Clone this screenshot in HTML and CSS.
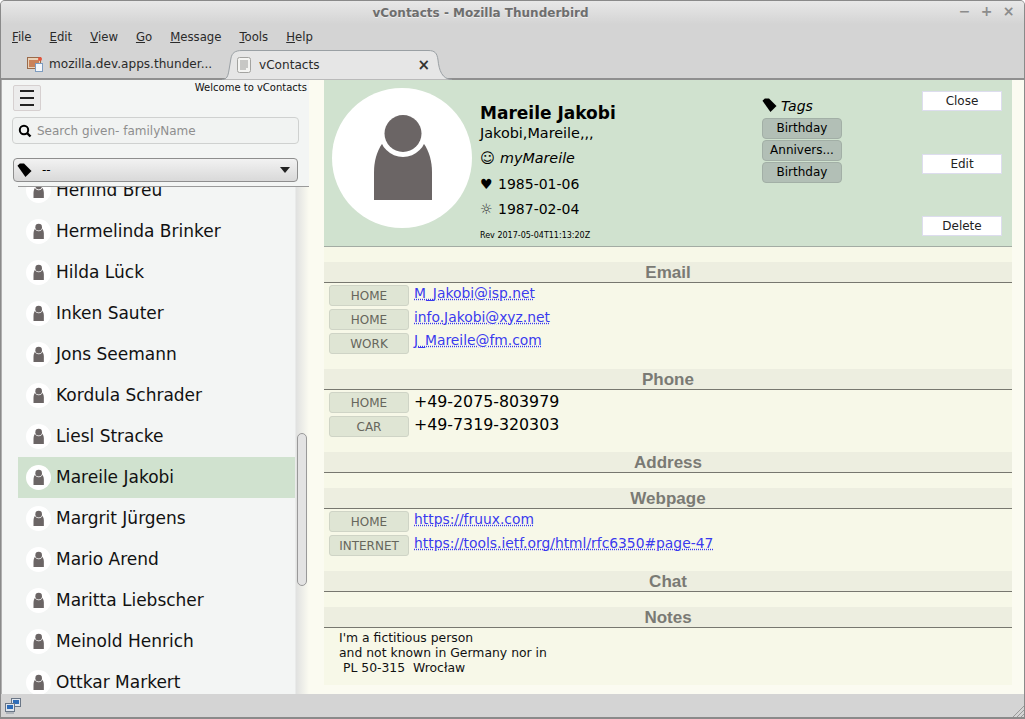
FILE: index.html

```html
<!DOCTYPE html>
<html lang="en">
<head>
  <meta charset="UTF-8">
  <title>vContacts - Mozilla Thunderbird</title>
  <link rel="stylesheet" href="styles.css">
</head>
<body>
  <svg class="defs" width="0" height="0">
    <symbol id="person" viewBox="0 0 140 140">
      <circle cx="70" cy="70" r="70" fill="#fff"/>
      <path d="M42 112V84c0-22 12-40 29-40s29 18 29 40v28z" fill="#6b6565"/>
      <circle cx="71" cy="45.500" r="23.500" fill="#fff"/>
      <circle cx="71" cy="45.500" r="18.500" fill="#6b6565"/>
    </symbol>
    <symbol id="tag" viewBox="0 0 16 16">
      <path d="M0.500 3 3 0.500H7.500L15.500 8.500 9 15z" fill="#000"/>
    </symbol>
  </svg>

  <div class="window">
    <div class="titlebar">
      <span class="title">vContacts - Mozilla Thunderbird</span>
      <span class="winbtns"><span>−</span><span>+</span><span>×</span></span>
    </div>

    <div class="menubar">
      <span><u>F</u>ile</span>
      <span><u>E</u>dit</span>
      <span><u>V</u>iew</span>
      <span><u>G</u>o</span>
      <span><u>M</u>essage</span>
      <span><u>T</u>ools</span>
      <span><u>H</u>elp</span>
    </div>

    <div class="tabbar">
      <div class="tab">
        <svg class="tabicon" width="16" height="16" viewBox="0 0 16 16">
          <rect x="0.500" y="1.500" width="13" height="11" fill="#e9d2b8" stroke="#9a6a4a"/>
          <rect x="2" y="4" width="10" height="7" fill="#c9825a"/>
          <rect x="8.500" y="7.500" width="7" height="8" fill="#f4f7fb" stroke="#7d9cc0"/>
          <circle cx="13" cy="3" r="2" fill="#e2543c"/>
        </svg>
        <span>mozilla.dev.apps.thunder...</span>
      </div>
      <div class="tab tab-active">
        <svg class="tabshape" width="232" height="30" viewBox="0 0 232 30">
          <path d="M0 29.500C5 29.500 6 26 7 20L9 8C10 3 13 0.500 20 0.500H206C213 0.500 215 3 216 10C217 20 220 29.500 230 29.500" fill="#e6e6e6" stroke="#9aa0a4"/>
        </svg>
        <svg class="tabicon" width="16" height="16" viewBox="0 0 16 16">
          <rect x="1.500" y="0.500" width="13" height="15" rx="2" fill="#f4f4f2" stroke="#a3a3a0"/>
          <path d="M4 4h8M4 6h8M4 8h8M4 10h8M4 12h6" stroke="#9a9a98"/>
        </svg>
        <span class="tabname">vContacts</span>
        <span class="tabclose">×</span>
      </div>
    </div>

    <div class="main">
      <aside class="sidebar">
        <div class="side-top">
          <div class="welcome">Welcome to vContacts</div>
          <button class="hamburger"><i></i><i></i><i></i></button>
          <div class="search">
            <svg width="14" height="14" viewBox="0 0 14 14">
              <circle cx="6" cy="6" r="4.200" fill="none" stroke="#000" stroke-width="2"/>
              <path d="M9 9l3.500 3.500" stroke="#000" stroke-width="2.400"/>
            </svg>
            <span>Search given- familyName</span>
          </div>
          <div class="tagselect">
            <svg width="15" height="15"><use href="#tag"/></svg>
            <span class="tagselect-val">--</span>
            <span class="caret"></span>
          </div>
        </div>
        <div class="listwrap">
          <ul class="contacts">
            <li><svg width="25" height="25"><use href="#person"/></svg>Herlind Breu</li>
            <li><svg width="25" height="25"><use href="#person"/></svg>Hermelinda Brinker</li>
            <li><svg width="25" height="25"><use href="#person"/></svg>Hilda Lück</li>
            <li><svg width="25" height="25"><use href="#person"/></svg>Inken Sauter</li>
            <li><svg width="25" height="25"><use href="#person"/></svg>Jons Seemann</li>
            <li><svg width="25" height="25"><use href="#person"/></svg>Kordula Schrader</li>
            <li><svg width="25" height="25"><use href="#person"/></svg>Liesl Stracke</li>
            <li class="selected"><svg width="25" height="25"><use href="#person"/></svg>Mareile Jakobi</li>
            <li><svg width="25" height="25"><use href="#person"/></svg>Margrit Jürgens</li>
            <li><svg width="25" height="25"><use href="#person"/></svg>Mario Arend</li>
            <li><svg width="25" height="25"><use href="#person"/></svg>Maritta Liebscher</li>
            <li><svg width="25" height="25"><use href="#person"/></svg>Meinold Henrich</li>
            <li><svg width="25" height="25"><use href="#person"/></svg>Ottkar Markert</li>
          </ul>
          <div class="thumb"></div>
        </div>
      </aside>

      <section class="detail">
        <header class="card">
          <svg class="photo" width="140" height="140"><use href="#person"/></svg>
          <div class="identity">
            <div class="fullname">Mareile Jakobi</div>
            <div class="structname">Jakobi,Mareile,,,</div>
            <div class="fact nick"><span class="glyph">☺</span><em>myMareile</em></div>
            <div class="fact bday"><span class="glyph">♥</span>1985-01-06</div>
            <div class="fact"><span class="glyph glyph-sun">☼</span>1987-02-04</div>
            <div class="rev">Rev 2017-05-04T11:13:20Z</div>
          </div>
          <div class="tags">
            <div class="tags-head"><svg width="15" height="15"><use href="#tag"/></svg><em>Tags</em></div>
            <div class="tagchip">Birthday</div>
            <div class="tagchip">Annivers...</div>
            <div class="tagchip">Birthday</div>
          </div>
          <div class="actions">
            <button>Close</button>
            <button>Edit</button>
            <button>Delete</button>
          </div>
        </header>

        <div class="group">
          <h3>Email</h3>
          <div class="row"><span class="kind">HOME</span><a href="#">M_Jakobi@isp.net</a></div>
          <div class="row"><span class="kind">HOME</span><a href="#">info.Jakobi@xyz.net</a></div>
          <div class="row"><span class="kind">WORK</span><a href="#">J_Mareile@fm.com</a></div>
        </div>

        <div class="group">
          <h3>Phone</h3>
          <div class="row"><span class="kind">HOME</span><span class="val">+49-2075-803979</span></div>
          <div class="row"><span class="kind">CAR</span><span class="val">+49-7319-320303</span></div>
        </div>

        <div class="group group-empty">
          <h3>Address</h3>
        </div>

        <div class="group">
          <h3>Webpage</h3>
          <div class="row"><span class="kind">HOME</span><a href="#">https://fruux.com</a></div>
          <div class="row"><span class="kind">INTERNET</span><a href="#">https://tools.ietf.org/html/rfc6350#page-47</a></div>
        </div>

        <div class="group group-empty">
          <h3>Chat</h3>
        </div>

        <div class="group group-notes">
          <h3>Notes</h3>
          <pre class="notes">I'm a fictitious person
and not known in Germany nor in
 PL 50-315  Wrocław</pre>
        </div>
      </section>
    </div>

    <div class="statusbar">
      <svg width="16" height="16" viewBox="0 0 16 16">
        <rect x="6.500" y="0.500" width="9" height="8" fill="#dfe6ee" stroke="#6a7686"/>
        <rect x="8" y="2" width="6" height="4" fill="#2f6db8"/>
        <rect x="0.500" y="5.500" width="9" height="8" fill="#dfe6ee" stroke="#6a7686"/>
        <rect x="2" y="7" width="6" height="4" fill="#2f6db8"/>
        <path d="M1 15h8" stroke="#8a94a0"/>
      </svg>
      <svg class="grip" width="11" height="13" viewBox="0 0 11 13">
        <path d="M0 13 11 2M4 13 11 6M8 13 11 10" stroke="#9a9a9a"/>
      </svg>
    </div>
  </div>
</body>
</html>
```

FILE: styles.css

```css
* { box-sizing: border-box; }
html, body { margin: 0; padding: 0; }
body { font-family: "DejaVu Sans", sans-serif; color: #000; background: #fff; overflow: hidden; }
.defs { position: absolute; }

.window { width: 1025px; height: 719px; display: flex; flex-direction: column; background: #d4d4d4; border: 1px solid #8a8a8a; border-bottom: 2px solid #8a8a8a; border-radius: 5px 5px 0 0; overflow: hidden; }

.titlebar { height: 23px; flex: none; display: flex; align-items: center; justify-content: center; padding-right: 64px; position: relative; background: linear-gradient(#e8e8e8, #d4d4d4); }
.title { font-size: 12px; font-weight: bold; color: #6e6e6e; text-shadow: 0 1px 0 #eee; }
.winbtns { position: absolute; right: 9px; top: 2px; display: flex; gap: 9px; font-size: 14px; font-weight: bold; color: #8c8c8c; }
.winbtns span { width: 13px; text-align: center; }

.menubar { height: 26px; flex: none; display: flex; gap: 18px; padding: 0 0 0 11px; align-items: center; font-size: 11.700px; color: #2a2a2a; }

.tabbar { height: 30px; flex: none; display: flex; align-items: flex-end; font-size: 12.100px; color: #2a2a2a; border-bottom: 2px solid #8f8f8f; }
.tab { height: 28px; display: flex; align-items: center; }
.tab:first-child { width: 225px; padding: 0 0 1px 26px; }
.tabicon { flex: none; margin-right: 6px; position: relative; }
.tab-active { width: 215px; height: 30px; margin-bottom: -2px; padding: 0 11px 0 10px; position: relative; }
.tab-active .tabicon { margin-right: 7px; }
.tabshape { position: absolute; left: -4px; top: 0; }
.tabname { flex: 1; position: relative; }
.tabclose { font-size: 15px; font-weight: bold; color: #333; line-height: 1; position: relative; }

.main { flex: 1; min-height: 0; display: flex; background: #fbfbf1; border-left: 1px solid #b0b0b0; padding-right: 12px; }

.sidebar { width: 307px; flex: none; display: flex; flex-direction: column; background: linear-gradient(90deg, #f3f5f4 293px, #e0e1e0 294px, #fbfbf1 307px); }
.side-top { height: 107px; flex: none; position: relative; padding: 5px 0 0 11px; background: #f3f5f4; }
.side-top::after { content: ""; position: absolute; left: 16px; right: 0; bottom: 0; height: 1px; background: #9a9a9a; }
.welcome { position: absolute; right: 2px; top: 2px; font-size: 10px; color: #111; }
.hamburger { display: flex; flex-direction: column; justify-content: center; gap: 5px; width: 28px; height: 26px; padding: 0 6px; background: #ececec; border: 1px solid #d6d0d0; border-radius: 2px; }
.hamburger i { display: block; height: 2px; background: #222; }
.search { width: 287px; height: 27px; margin: 6px 0 0 -1px; padding: 0 8px 0 5px; display: flex; align-items: center; gap: 5px; background: #f1f3f2; border: 1px solid #cfd1d0; border-radius: 4px; font-size: 12px; color: #8e8e8e; }
.tagselect { width: 285px; height: 24px; margin-top: 14px; padding: 0 7px 0 3px; display: flex; align-items: center; gap: 10px; background: linear-gradient(#f2f2f2, #d9d9d9); border: 1px solid #8e8e8e; border-radius: 4px; font-size: 12px; }
.tagselect-val { flex: 1; }
.caret { border-left: 5px solid transparent; border-right: 5px solid transparent; border-top: 6px solid #222; }

.listwrap { flex: 1; min-height: 0; position: relative; overflow: hidden; }
.contacts { list-style: none; margin: -17px 0 0 16px; padding: 0; width: 277px; }
.contacts li { height: 41px; display: flex; align-items: center; gap: 5px; padding: 0 0 2px 8px; font-size: 17px; color: #111; }
.contacts li svg { margin-top: 2px; }
.contacts li.selected { background: #d0e2cf; }
.thumb { position: absolute; left: 295px; top: 246px; width: 10px; height: 153px; background: #e3e3e3; border: 1px solid #999; border-radius: 5px; }

.detail { flex: 1; min-width: 0; margin: 0 0 9px 15px; background: #f7f8e8; }
.card { height: 167px; display: flex; background: #d0e2cf; border-bottom: 1px solid #a3aca3; padding: 8px 10px 0 8px; }
.photo { flex: none; }
.identity { width: 290px; padding: 15px 0 0 8px; }
.fullname { font-size: 17px; font-weight: bold; line-height: 21px; }
.structname { font-size: 14.400px; line-height: 18px; }
.fact { font-size: 14px; height: 25px; line-height: 25px; }
.nick { margin-top: 4px; font-size: 14.300px; }
.nick .glyph { width: 20px; }
.bday { margin-top: 1px; }
.glyph { display: inline-block; width: 18px; }
.glyph-sun { color: #333; }
.rev { font-size: 8px; margin-top: 9px; }
.tags { width: 160px; padding-top: 8px; }
.tags-head { display: flex; align-items: center; gap: 4px; font-size: 14px; height: 22px; padding-bottom: 3px; }
.tagchip { width: 80px; height: 21px; margin-top: 1px; background: #b2bfb6; border: 1px solid #a2afa6; border-radius: 4px; font-size: 12px; line-height: 19px; text-align: center; }
.tagchip:nth-child(2) { margin-top: 0; }
.actions { flex: 1; display: flex; flex-direction: column; align-items: flex-end; justify-content: space-between; padding: 3px 0 10px; }
.actions button { width: 80px; height: 20px; padding: 0; background: #fff; border: 1px solid #dde; border-radius: 0; font: 12px "DejaVu Sans", sans-serif; color: #222; }

.group { margin-top: 15px; }
.group h3 { margin: 0; height: 21px; font: bold 17px/21px "Liberation Sans", sans-serif; color: #7a7a74; text-align: center; background: #edeee0; border-bottom: 1px solid #77776f; }
.row { height: 24px; display: flex; align-items: flex-start; padding: 2px 0 0 5px; gap: 5px; font-size: 13.850px; }
.row:last-child { height: 23px; }
.kind { width: 80px; height: 21px; flex: none; background: #dfe5d4; border: 1px solid #cfd4c6; border-radius: 3px; font-size: 12px; line-height: 21px; text-align: center; color: #66665c; }
.row a { color: #3a3aee; line-height: 16px; text-decoration: underline dotted; }
.row:nth-child(4) a { margin-top: -1px; }
.val { font-size: 15.800px; line-height: 18px; padding-top: 1px; }
.row:nth-child(3) .val { margin-top: -1px; }
.notes { margin: 0; padding: 2px 0 0 15px; font: 12.400px/15px "DejaVu Sans", sans-serif; color: #111; }

.statusbar { height: 23px; flex: none; display: flex; align-items: center; justify-content: space-between; padding: 0 0 0 4px; position: relative; }
.grip { align-self: flex-end; }
```
